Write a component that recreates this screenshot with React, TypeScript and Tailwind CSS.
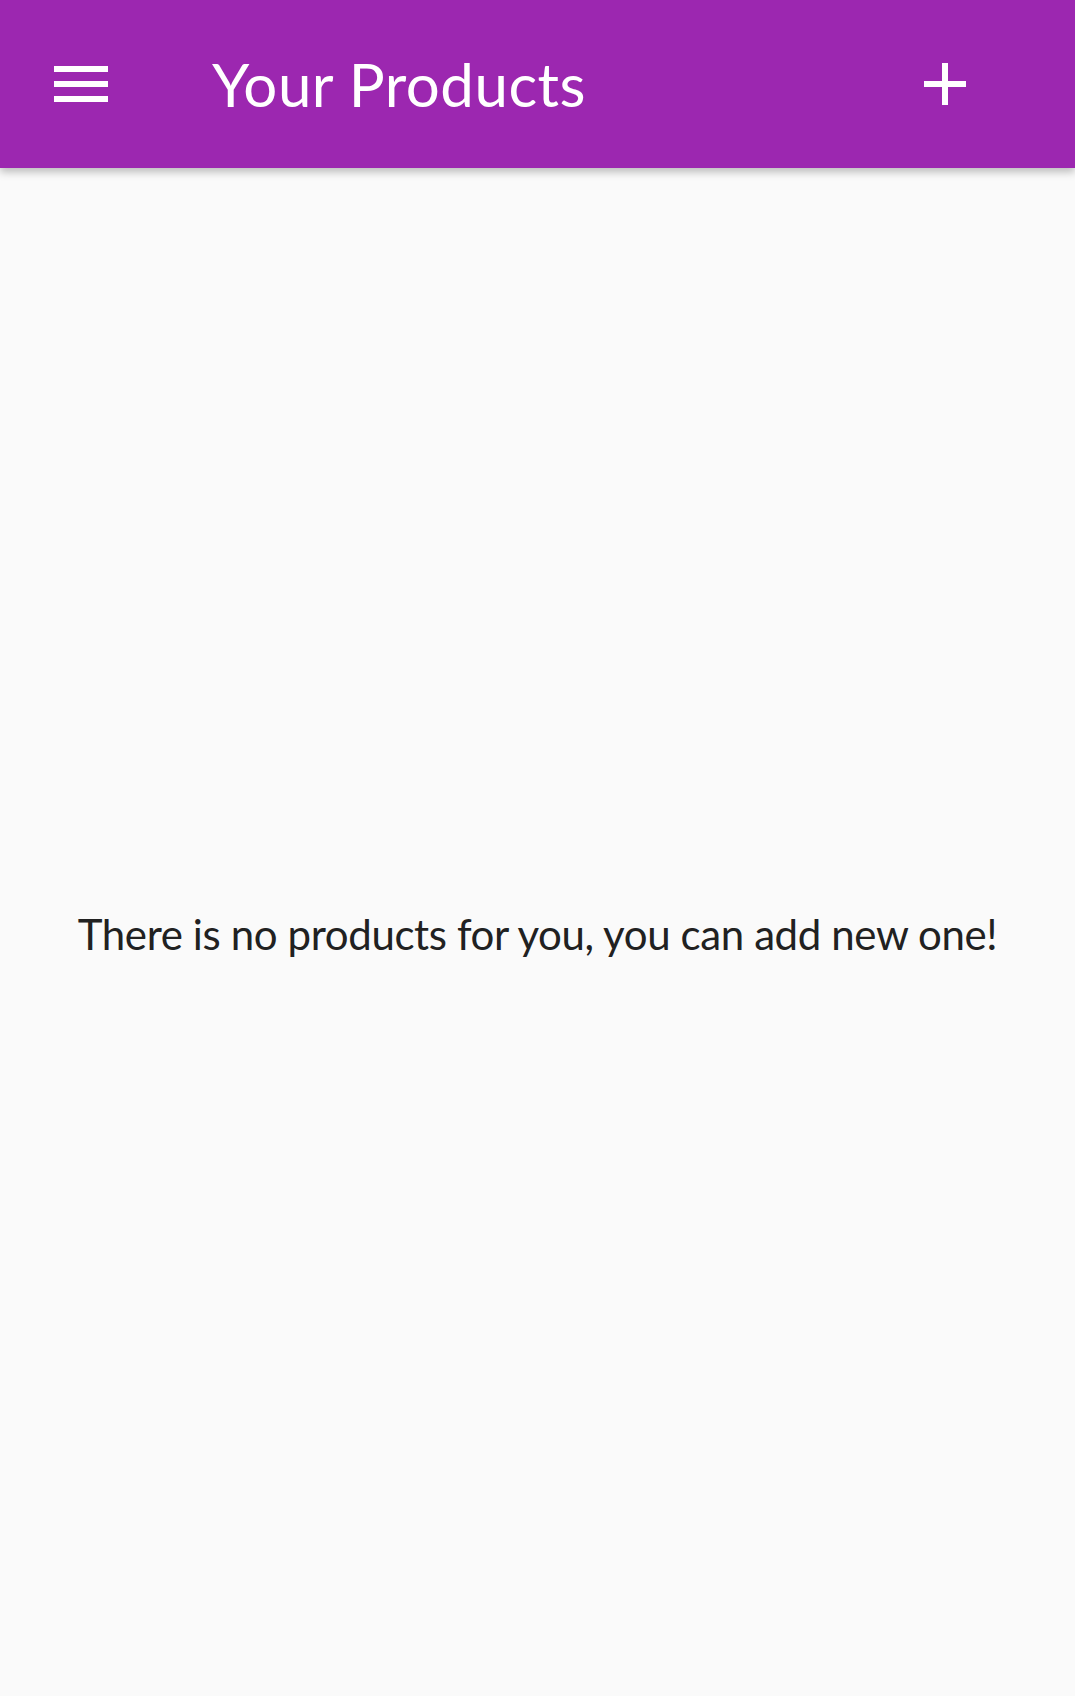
export default function App() {
  return (
    <div className="min-h-[1696px] flex flex-col bg-[#fafafa]" style={{ fontFamily: "Lato, 'Noto Sans', sans-serif" }}>
      {/* App bar */}
      <header className="relative z-10 flex h-[168px] shrink-0 items-center bg-[#9c27b0] pl-[54px] pr-[109px] shadow-[0_4px_8px_rgba(0,0,0,0.25)]">
        <button aria-label="Open menu" className="flex h-[36px] w-[54px] shrink-0 flex-col justify-between">
          <span className="block h-[6px] w-full bg-white" />
          <span className="block h-[6px] w-full bg-white" />
          <span className="block h-[6px] w-full bg-white" />
        </button>
        <h1 className="ml-[104px] flex-1 text-[60px] leading-none font-normal tracking-[0.5px] text-white">Your Products</h1>
        <button aria-label="Add product" className="shrink-0">
          <svg className="block h-[42px] w-[42px]" viewBox="0 0 42 42" fill="white">
            <rect x="18" y="0" width="6" height="42" />
            <rect x="0" y="18" width="42" height="6" />
          </svg>
        </button>
      </header>

      {/* Empty state */}
      <main className="flex flex-1 items-center justify-center">
        <p className="mt-[4px] text-[42px] leading-none tracking-[-0.38px] text-[#212121]">There is no products for you, you can add new one!</p>
      </main>
    </div>
  );
}
